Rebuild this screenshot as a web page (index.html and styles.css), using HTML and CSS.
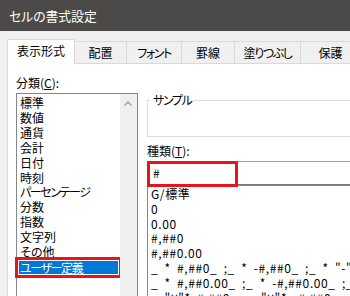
FILE: index.html
```html
<!DOCTYPE html>
<html lang="ja">
<head>
    <meta charset="UTF-8">
    <meta name="viewport" content="width=device-width, initial-scale=1.0">
    <title>セルの書式設定</title>
    <link rel="stylesheet" href="styles.css">
</head>
<body>
    <div class="titlebar">セルの書式設定</div>

    <div class="dialog">
        <div class="tabs">
            <div class="tab active">表示形式</div>
            <div class="tab tab-align">配置</div>
            <div class="tab tab-font"><span class="kana">フォント</span></div>
            <div class="tab tab-border">罫線</div>
            <div class="tab tab-fill"><span class="kana">塗りつぶし</span></div>
            <div class="tab tab-protect">保護</div>
        </div>

        <div class="panel">
            <div class="col-left">
                <div class="label">分類(<u>C</u>):</div>
                <div class="listbox">
                    <ul class="items">
                        <li>標準</li>
                        <li>数値</li>
                        <li>通貨</li>
                        <li>会計</li>
                        <li>日付</li>
                        <li>時刻</li>
                        <li><span class="kana">パーセンテージ</span></li>
                        <li>分数</li>
                        <li>指数</li>
                        <li>文字列</li>
                        <li>その他</li>
                        <li class="selected"><span class="kana">ユーザー定義</span></li>
                    </ul>
                    <div class="scrollbar">
                        <svg width="17" height="17" viewBox="0 0 17 17">
                            <polyline points="4.5,10.5 8,7 11.5,10.5" fill="none" stroke="#a6a6a6" stroke-width="1.6"/>
                        </svg>
                    </div>
                </div>
            </div>

            <div class="col-right">
                <fieldset class="sample">
                    <legend><span class="kana">サンプル</span></legend>
                </fieldset>
                <div class="label type-label">種類(<u>T</u>):</div>
                <div class="input">
                    #
                    <div class="mark"></div>
                </div>
                <ul class="formats">
                    <li>G/標準</li>
                    <li>0</li>
                    <li>0.00</li>
                    <li>#,##0</li>
                    <li>#,##0.00</li>
                    <li>_ * #,##0_ ;_ * -#,##0_ ;_ * "-"_ ;_ @_ </li>
                    <li>_ * #,##0.00_ ;_ * -#,##0.00_ ;_ * "-"??_ ;_ @_ </li>
                    <li>_ "¥"* #,##0_ ;_ "¥"* -#,##0_ ;_ "¥"* "-"_ ;_ @_ </li>
                </ul>
            </div>
        </div>
    </div>
</body>
</html>
```

FILE: styles.css
```css
html, body {
    margin: 0;
    height: 100%;
    overflow: hidden;
}

body {
    font-family: "Noto Sans CJK JP", "Noto Sans", sans-serif;
    font-feature-settings: "palt";
    font-size: 12px;
    color: #000;
    background: #f0f0f0;
}

/* katakana in Yu Gothic UI runs narrower than in Noto */
.kana {
    letter-spacing: -1.4px;
}

.titlebar {
    height: 31px;
    line-height: 31px;
    padding-left: 9px;
    background: #4c4a48;
    color: #fff;
    font-size: 12.8px;
}

.dialog {
    padding: 8px 0 0 7px;
}

.tabs {
    display: flex;
    align-items: flex-end;
    height: 24px;
}

.tab {
    box-sizing: border-box;
    height: 22px;
    line-height: 21px;
    text-align: center;
    border-top: 1px solid #d9d9d9;
    border-right: 1px solid #d9d9d9;
    flex: none;
}

.tab.active {
    position: relative;
    z-index: 1;
    width: 68px;
    height: 25px;
    line-height: 22px;
    margin-bottom: -1px;
    background: #fff;
    border-left: 1px solid #d9d9d9;
}

.tab-align { width: 52px; }
.tab-font { width: 55px; }
.tab-border { width: 53px; }
.tab-fill { width: 66px; }
.tab-protect { width: 60px; }

.panel {
    display: flex;
    gap: 9px;
    height: 240px;
    padding: 11px 0 0 8px;
    background: #fff;
    border-top: 1px solid #d9d9d9;
    border-left: 1px solid #d9d9d9;
}

.label {
    line-height: 15px;
}

.col-left {
    flex: none;
    width: 122px;
}

.col-left .label {
    margin-bottom: 3px;
}

.listbox {
    box-sizing: border-box;
    display: flex;
    width: 122px;
    height: 220px;
    border: 1px solid #828790;
}

.items {
    flex: 1;
    list-style: none;
    margin: 0;
    padding: 2px 0 0;
}

.items li {
    line-height: 14.9px;
    padding-left: 3px;
    white-space: nowrap;
}

.items li.selected {
    height: 13px;
    line-height: 13px;
    margin: 1px 2px 0 2px;
    padding-left: 1px;
    background: #0078d7;
    color: #fff;
    outline: 3px solid #e8141b;
    outline-offset: 1px;
}

.scrollbar {
    flex: none;
    width: 17px;
    background: #f0f0f0;
}

.scrollbar svg {
    display: block;
    margin-top: 1px;
}

.col-right {
    flex: none;
    width: 240px;
}

.sample {
    box-sizing: border-box;
    height: 44px;
    margin: 18px 0 0;
    padding: 0 0 0 2px;
    border: 1px solid #dcdcdc;
    border-right: none;
}

.sample legend {
    padding: 0 3px;
    line-height: 14px;
}

.type-label {
    margin: 6px 0 3px;
}

.input {
    position: relative;
    box-sizing: border-box;
    height: 24px;
    line-height: 22px;
    padding-left: 5px;
    border: 1px solid #a0a0a0;
    border-bottom-color: #7a7a7a;
    border-right: none;
}

.mark {
    position: absolute;
    left: -1px;
    top: -1px;
    width: 91px;
    height: 26px;
    box-sizing: border-box;
    border: 3px solid #e8141b;
}

.formats {
    list-style: none;
    margin: 0;
    padding: 1px 0 0 3px;
    height: 130px;
    border-left: 1px solid #828790;
    border-top: 1px solid #828790;
    letter-spacing: 0.6px;
    word-spacing: 3px;
}

.formats li {
    line-height: 14.8px;
    white-space: nowrap;
}
```
